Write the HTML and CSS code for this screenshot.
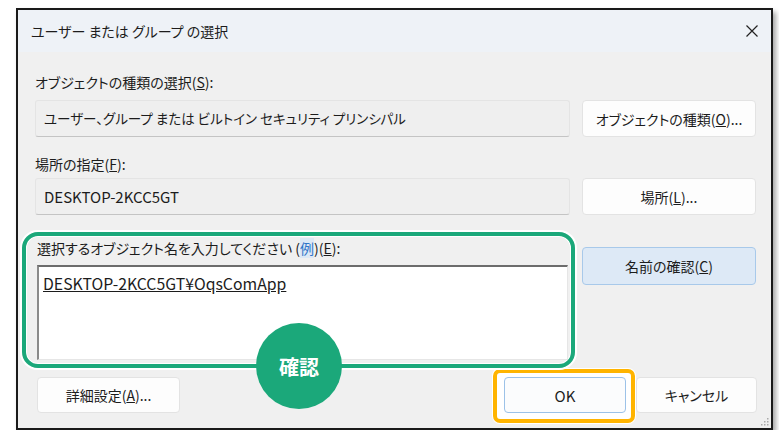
FILE: index.html
```html
<!DOCTYPE html>
<html lang="ja">
<head>
    <meta charset="UTF-8">
    <meta name="viewport" content="width=device-width, initial-scale=1.0">
    <title>ユーザー または グループ の選択</title>
    <link rel="stylesheet" href="styles.css">
</head>
<body>
    <div class="window">
        <div class="titlebar">
            <span class="title">ユーザー または グループ の選択</span>
            <svg class="close" width="12" height="12" viewBox="0 0 12 12">
                <path d="M0.5 0.5 L11.5 11.5 M11.5 0.5 L0.5 11.5" stroke="#222" stroke-width="1.2" fill="none"/>
            </svg>
        </div>
        <div class="content">
            <div class="label label-first">オブジェクトの種類の選択(<u>S</u>):</div>
            <div class="field">ユーザー、グループ または ビルトイン セキュリティ プリンシパル</div>
            <button class="btn">オブジェクトの種類(<u>O</u>)...</button>

            <div class="label label-second">場所の指定(<u>F</u>):</div>
            <div class="field field-latin">DESKTOP-2KCC5GT</div>
            <button class="btn">場所(<u>L</u>)...</button>

            <div class="highlight">
                <div class="label">選択するオブジェクト名を入力してください (<span class="link">例</span>)(<u>E</u>):</div>
                <div class="names"><u>DESKTOP-2KCC5GT¥OqsComApp</u></div>
                <div class="badge">確認</div>
            </div>
            <button class="btn btn-check">名前の確認(<u>C</u>)</button>

            <div class="footer">
                <button class="btn btn-adv">詳細設定(<u>A</u>)...</button>
                <span class="spacer"></span>
                <span class="focus-ring"><button class="btn btn-ok">OK</button></span>
                <button class="btn btn-cancel">キャンセル</button>
            </div>
        </div>
        <svg class="grip" width="8" height="8" viewBox="0 0 8 8">
            <rect x="6" y="0" width="1.5" height="1.5" fill="#aaa"/>
            <rect x="3" y="3" width="1.5" height="1.5" fill="#aaa"/>
            <rect x="6" y="3" width="1.5" height="1.5" fill="#aaa"/>
            <rect x="0" y="6" width="1.5" height="1.5" fill="#aaa"/>
            <rect x="3" y="6" width="1.5" height="1.5" fill="#aaa"/>
            <rect x="6" y="6" width="1.5" height="1.5" fill="#aaa"/>
        </svg>
    </div>
</body>
</html>
```
FILE: styles.css
```css
body {
    margin: 0;
    background-color: #fff;
    font-family: "Noto Sans CJK JP", "Noto Sans", sans-serif;
    font-size: 14px;
    color: #1c1c1c;
    font-feature-settings: "palt";
}
.window {
    position: relative;
    box-sizing: border-box;
    width: 757px;
    height: 422px;
    margin: 8px 0 0 16px;
    border: 2px solid #1a1a1a;
    background-color: #f0f0f0;
    box-shadow: 3px 4px 5px rgba(0, 0, 0, 0.35);
    display: flex;
    flex-direction: column;
}
.titlebar {
    flex: none;
    height: 42px;
    padding: 0 13px;
    background-color: #eef2f7;
    display: flex;
    align-items: center;
    justify-content: space-between;
    font-size: 14px;
}
.content {
    padding: 0 15px 0 17px;
    display: grid;
    grid-template-columns: 535px 174px;
    column-gap: 12px;
    align-items: start;
}
.label {
    grid-column: 1 / -1;
    height: 18px;
    line-height: 18px;
    white-space: nowrap;
}
.label-first {
    margin: 21px 0 9px;
}
.label-second {
    margin: 18px 0 5px;
}
.field {
    box-sizing: border-box;
    height: 37px;
    padding: 0 8px;
    line-height: 35px;
    border: 1px solid #e4e4e4;
    border-bottom-color: #c4c4c4;
    border-radius: 3px;
    background-color: #efefef;
    white-space: nowrap;
    font-size: 13.5px;
}
.field-latin {
    font-size: 15px;
}
.btn {
    box-sizing: border-box;
    height: 37px;
    padding: 0;
    border: 1px solid #e3e3e3;
    border-radius: 4px;
    background-color: #fdfdfd;
    font-family: inherit;
    font-size: 14px;
    font-feature-settings: "palt";
    color: #1c1c1c;
}
.highlight {
    position: relative;
    grid-column: 1;
    margin: 17px -5px 0 -13px;
    padding: 3px 3px 4px 11px;
    border: 4px solid #1ba87a;
    border-radius: 16px;
    box-shadow: 0 0 0 2px #fff, inset 0 0 0 1px #fff;
}
.highlight .label {
    margin-bottom: 8px;
}
.link {
    color: #2f74c8;
    background-color: #dce8f5;
}
.names {
    box-sizing: border-box;
    height: 95px;
    padding: 8px 4px;
    border-top: 2px solid #6c6c6c;
    border-left: 2px solid #8a8a8a;
    border-right: 1px solid #e6e6e6;
    border-bottom: 1px solid #e6e6e6;
    background-color: #fff;
    line-height: 18px;
    font-size: 15.8px;
}
.badge {
    position: absolute;
    left: 230px;
    bottom: -45px;
    width: 86px;
    height: 86px;
    border-radius: 50%;
    background-color: #1ba87a;
    color: #fff;
    font-size: 20px;
    font-weight: bold;
    display: flex;
    align-items: center;
    justify-content: center;
}
.btn-check {
    margin-top: 32px;
    height: 38px;
    background-color: #dde9f6;
    border-color: #a8c9ea;
}
.footer {
    grid-column: 1 / -1;
    display: flex;
    align-items: flex-start;
    margin-top: 9px;
}
.footer .btn {
    height: 36px;
}
.btn-adv {
    width: 143px;
    margin-left: 2px;
}
.spacer {
    flex: 1;
}
.focus-ring {
    display: flex;
    margin: -8px 1px -10px 0;
    padding: 4px 5px 6px 7px;
    border: 4px solid #ffb400;
    border-radius: 7px;
    background-color: #fff;
    box-shadow: 0 0 0 1px #fff;
}
.btn-ok {
    width: 122px;
    border-color: #9cc2e8;
    background-color: #fbfcfd;
    font-size: 15px;
}
.btn-cancel {
    width: 121px;
    margin-right: -1px;
}
.grip {
    position: absolute;
    right: 2px;
    bottom: 2px;
}
```
